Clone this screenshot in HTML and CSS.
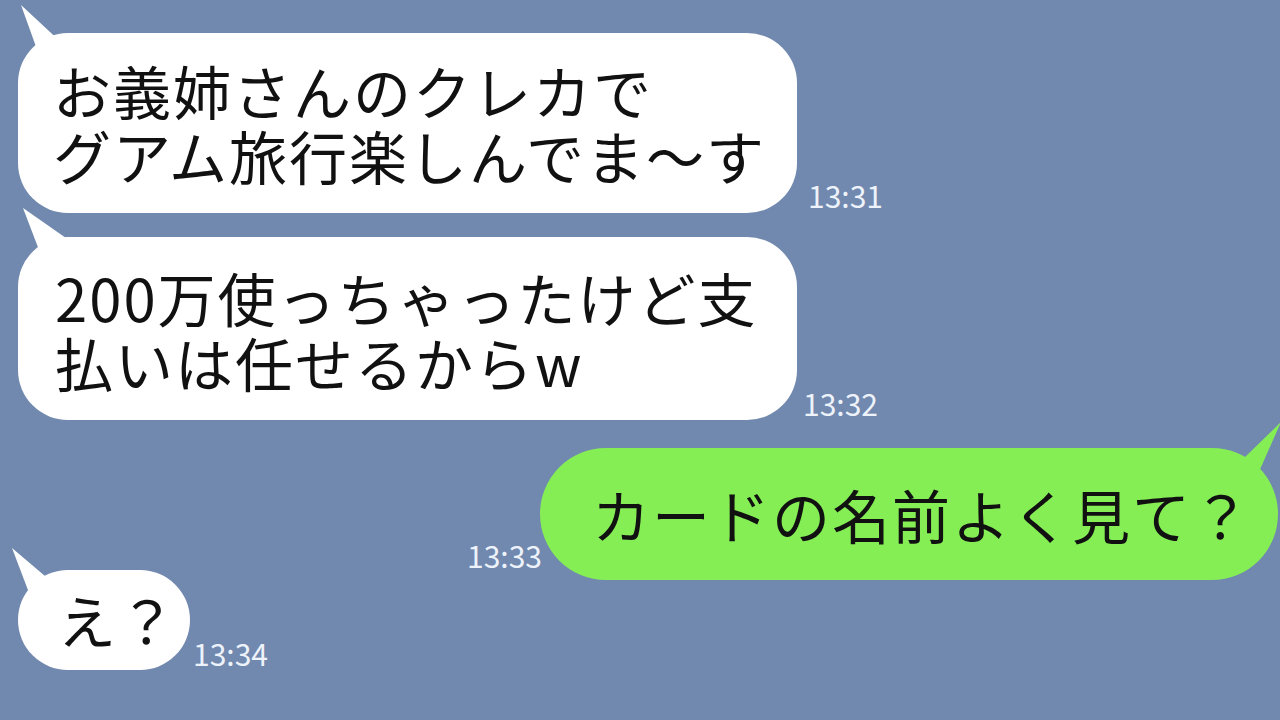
FILE: index.html
```html
<!doctype html>
<html>

<head>
    <title>Chat</title>
    <link rel="stylesheet" href="styles.css">
</head>

<body>
    <div class="chat">
        <div class="row">
            <div class="bubble white first">
                <svg class="tail" viewBox="0 0 80 70"><polygon points="3,2 21,52 46,42" /></svg>
                <div class="line">お義姉さんのクレカで</div>
                <div class="line">グアム旅行楽しんでま〜す</div>
            </div>
            <span class="time t1">13:31</span>
        </div>

        <div class="row">
            <div class="bubble white second">
                <svg class="tail" viewBox="0 0 80 70"><polygon points="5,1 26,56 58,38" /></svg>
                <div class="line">200万使っちゃったけど支</div>
                <div class="line">払いは任せるからw</div>
            </div>
            <span class="time t2">13:32</span>
        </div>

        <div class="row mine">
            <span class="time t3">13:33</span>
            <div class="bubble green">
                <svg class="tail-r" viewBox="0 0 80 70"><polygon points="73,4 32,44 50,56" /></svg>
                <div class="line">カードの名前よく見て？</div>
            </div>
        </div>

        <div class="row last">
            <div class="bubble white short">
                <svg class="tail" viewBox="0 0 80 70"><polygon points="-6,8 13,58 34,42" /></svg>
                <div class="line">え？</div>
            </div>
            <span class="time t4">13:34</span>
        </div>
    </div>
</body>

</html>
```

FILE: styles.css
```css
body {
    margin: 0;
    background-color: #7189ae;
    font-family: "Noto Sans CJK JP", "Noto Sans", sans-serif;
    overflow: hidden;
}

.chat {
    width: 1280px;
    height: 720px;
    box-sizing: border-box;
    padding: 33px 2px 0 18px;
    display: flex;
    flex-direction: column;
}

.row {
    display: flex;
    align-items: flex-end;
}

.row + .row {
    margin-top: 24px;
}

.row.mine {
    justify-content: flex-end;
    margin-top: 28px;
}

.row.last {
    margin-top: -10px;
}

.bubble {
    position: relative;
    color: #111;
    font-size: 58px;
    letter-spacing: 2px;
    white-space: nowrap;
    box-sizing: border-box;
}

.line {
    height: 65px;
    line-height: 65px;
}

.white {
    background-color: #fff;
}

.green {
    background-color: #86ee55;
}

.tail,
.tail-r {
    position: absolute;
    top: -30px;
    width: 80px;
    height: 70px;
    overflow: visible;
}

.tail {
    left: 0;
}

.tail-r {
    left: calc(100% - 70px);
}

.white .tail polygon {
    fill: #fff;
}

.green .tail-r polygon {
    fill: #86ee55;
}

.first {
    width: 779px;
    height: 180px;
    padding: 25px 0 0 35px;
    border-radius: 50px;
}

.second {
    width: 779px;
    height: 183px;
    padding: 28px 0 0 37px;
    border-radius: 50px;
}

.green {
    width: 738px;
    height: 132px;
    padding: 34px 0 0 52px;
    border-radius: 66px;
}

.short {
    width: 172px;
    height: 100px;
    padding: 17px 0 0 40px;
    border-radius: 50px;
}

.time {
    color: #eef3fb;
    font-size: 30px;
    line-height: 1;
}

.t1 {
    margin: 0 0 3px 11px;
}

.t2 {
    margin: 0 0 2px 6px;
}

.t3 {
    margin: 0 -2px 10px 0;
}

.t4 {
    margin: 0 0 2px 3px;
}
```
